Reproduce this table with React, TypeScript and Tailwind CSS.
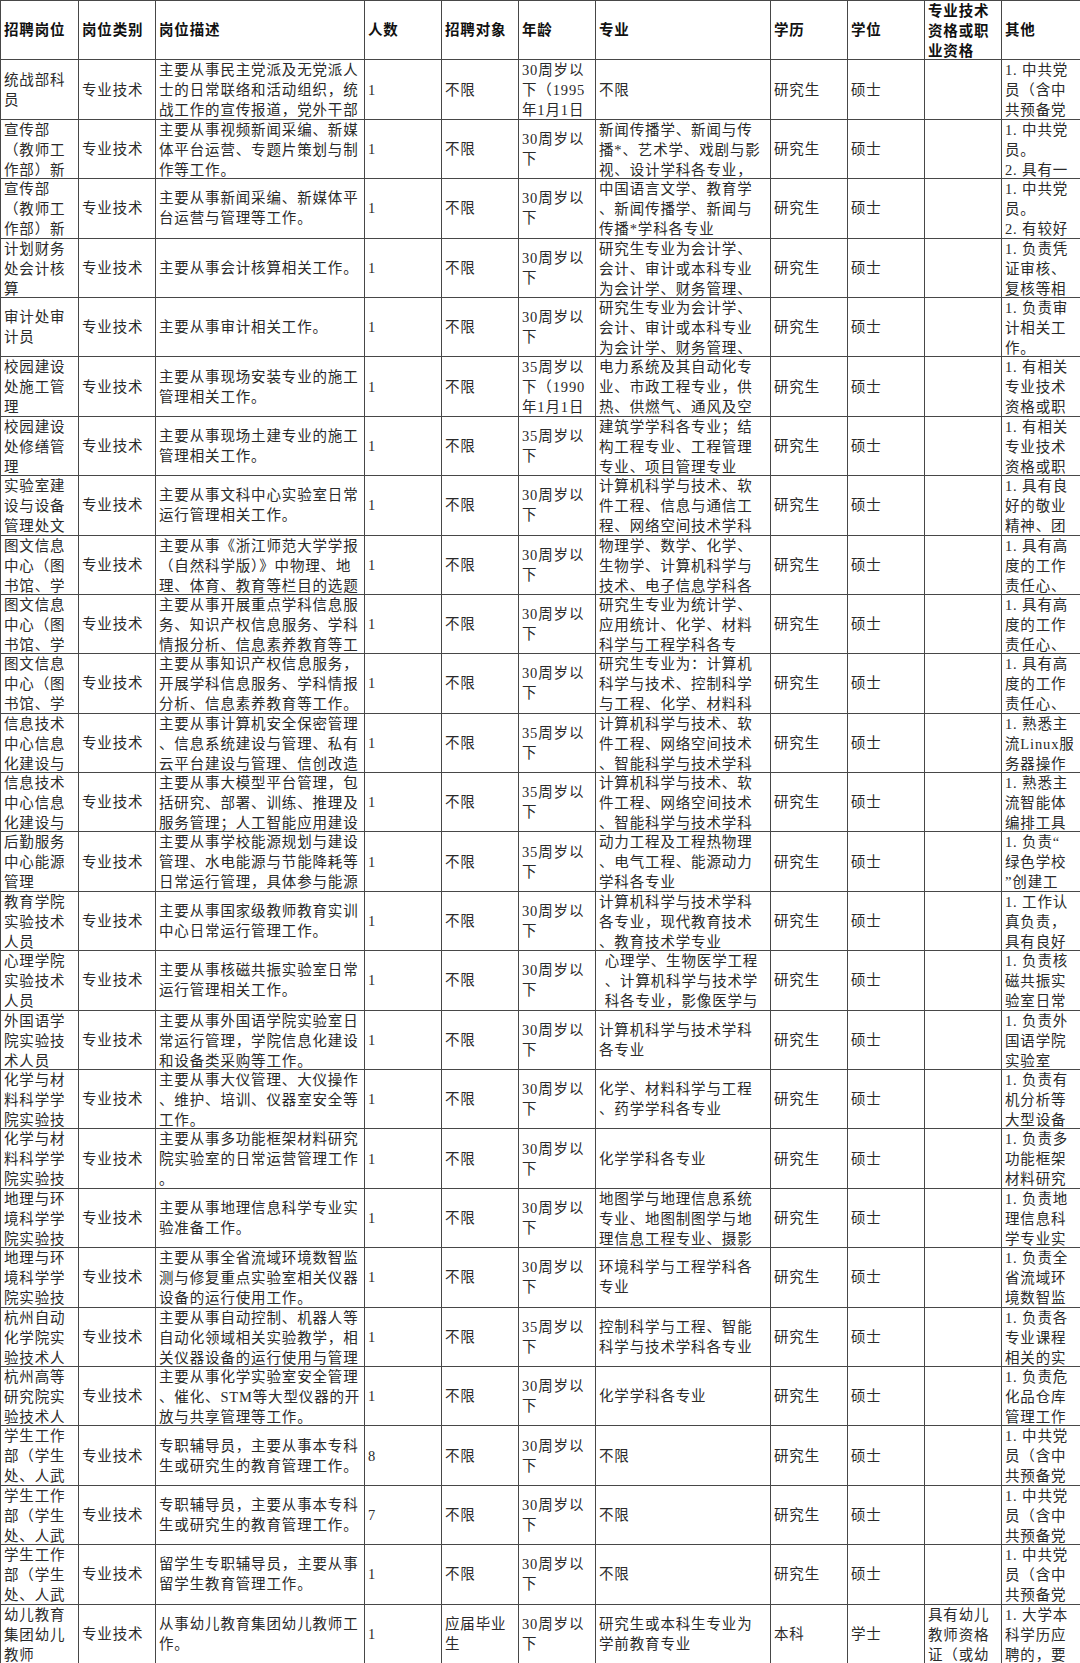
const headers = [
  "招聘岗位",
  "岗位类别",
  "岗位描述",
  "人数",
  "招聘对象",
  "年龄",
  "专业",
  "学历",
  "学位",
  "专业技术\n资格或职\n业资格",
  "其他",
];

const partyMember = "1. 中共党\n员（含中\n共预备党";
const u30 = "30周岁以\n下";
const u35 = "35周岁以\n下";
const xi = "图文信息\n中心（图\n书馆、学";
const it = "信息技术\n中心信息\n化建设与";
const stu = "学生工作\n部（学生\n处、人武";
const chem = "化学与材\n料科学学\n院实验技";
const geo = "地理与环\n境科学学\n院实验技";
const acct = "研究生专业为会计学、\n会计、审计或本科专业\n为会计学、财务管理、";
const cs = "计算机科学与技术、软\n件工程、网络空间技术\n、智能科学与技术学科";
const duty = "1. 具有高\n度的工作\n责任心、";
const build = "1. 有相关\n专业技术\n资格或职";

// 岗位类别 / 招聘对象 / 学历 / 学位 are mostly the same, so rows only list what changes
type Row = {
  post: string;
  desc: string;
  num?: string;
  target?: string;
  age: string;
  major: string;
  edu?: string;
  degree?: string;
  qual?: string;
  other: string;
};

const rows: Row[] = [
  {
    post: "统战部科\n员",
    desc: "主要从事民主党派及无党派人\n士的日常联络和活动组织，统\n战工作的宣传报道，党外干部",
    age: "30周岁以\n下（1995\n年1月1日",
    major: "不限",
    other: partyMember,
  },
  {
    post: "宣传部\n（教师工\n作部）新",
    desc: "主要从事视频新闻采编、新媒\n体平台运营、专题片策划与制\n作等工作。",
    age: u30,
    major: "新闻传播学、新闻与传\n播*、艺术学、戏剧与影\n视、设计学科各专业，",
    other: "1. 中共党\n员。\n2. 具有一",
  },
  {
    post: "宣传部\n（教师工\n作部）新",
    desc: "主要从事新闻采编、新媒体平\n台运营与管理等工作。",
    age: u30,
    major: "中国语言文学、教育学\n、新闻传播学、新闻与\n传播*学科各专业",
    other: "1. 中共党\n员。\n2. 有较好",
  },
  {
    post: "计划财务\n处会计核\n算",
    desc: "主要从事会计核算相关工作。",
    age: u30,
    major: acct,
    other: "1. 负责凭\n证审核、\n复核等相",
  },
  {
    post: "审计处审\n计员",
    desc: "主要从事审计相关工作。",
    age: u30,
    major: acct,
    other: "1. 负责审\n计相关工\n作。",
  },
  {
    post: "校园建设\n处施工管\n理",
    desc: "主要从事现场安装专业的施工\n管理相关工作。",
    age: "35周岁以\n下（1990\n年1月1日",
    major: "电力系统及其自动化专\n业、市政工程专业，供\n热、供燃气、通风及空",
    other: build,
  },
  {
    post: "校园建设\n处修缮管\n理",
    desc: "主要从事现场土建专业的施工\n管理相关工作。",
    age: u35,
    major: "建筑学学科各专业；结\n构工程专业、工程管理\n专业、项目管理专业",
    other: build,
  },
  {
    post: "实验室建\n设与设备\n管理处文",
    desc: "主要从事文科中心实验室日常\n运行管理相关工作。",
    age: u30,
    major: "计算机科学与技术、软\n件工程、信息与通信工\n程、网络空间技术学科",
    other: "1. 具有良\n好的敬业\n精神、团",
  },
  {
    post: xi,
    desc: "主要从事《浙江师范大学学报\n（自然科学版）》中物理、地\n理、体育、教育等栏目的选题",
    age: u30,
    major: "物理学、数学、化学、\n生物学、计算机科学与\n技术、电子信息学科各",
    other: duty,
  },
  {
    post: xi,
    desc: "主要从事开展重点学科信息服\n务、知识产权信息服务、学科\n情报分析、信息素养教育等工",
    age: u30,
    major: "研究生专业为统计学、\n应用统计、化学、材料\n科学与工程学科各专",
    other: duty,
  },
  {
    post: xi,
    desc: "主要从事知识产权信息服务，\n开展学科信息服务、学科情报\n分析、信息素养教育等工作。",
    age: u30,
    major: "研究生专业为：计算机\n科学与技术、控制科学\n与工程、化学、材料科",
    other: duty,
  },
  {
    post: it,
    desc: "主要从事计算机安全保密管理\n、信息系统建设与管理、私有\n云平台建设与管理、信创改造",
    age: u35,
    major: cs,
    other: "1. 熟悉主\n流Linux服\n务器操作",
  },
  {
    post: it,
    desc: "主要从事大模型平台管理，包\n括研究、部署、训练、推理及\n服务管理；人工智能应用建设",
    age: u35,
    major: cs,
    other: "1. 熟悉主\n流智能体\n编排工具",
  },
  {
    post: "后勤服务\n中心能源\n管理",
    desc: "主要从事学校能源规划与建设\n管理、水电能源与节能降耗等\n日常运行管理，具体参与能源",
    age: u35,
    major: "动力工程及工程热物理\n、电气工程、能源动力\n学科各专业",
    other: "1. 负责“\n绿色学校\n”创建工",
  },
  {
    post: "教育学院\n实验技术\n人员",
    desc: "主要从事国家级教师教育实训\n中心日常运行管理工作。",
    age: u30,
    major: "计算机科学与技术学科\n各专业，现代教育技术\n、教育技术学专业",
    other: "1. 工作认\n真负责，\n具有良好",
  },
  {
    post: "心理学院\n实验技术\n人员",
    desc: "主要从事核磁共振实验室日常\n运行管理相关工作。",
    age: u30,
    major: "\u2004心理学、生物医学工程\n\u2004、计算机科学与技术学\n\u2004科各专业，影像医学与",
    other: "1. 负责核\n磁共振实\n验室日常",
  },
  {
    post: "外国语学\n院实验技\n术人员",
    desc: "主要从事外国语学院实验室日\n常运行管理，学院信息化建设\n和设备类采购等工作。",
    age: u30,
    major: "计算机科学与技术学科\n各专业",
    other: "1. 负责外\n国语学院\n实验室",
  },
  {
    post: chem,
    desc: "主要从事大仪管理、大仪操作\n、维护、培训、仪器室安全等\n工作。",
    age: u30,
    major: "化学、材料科学与工程\n、药学学科各专业",
    other: "1. 负责有\n机分析等\n大型设备",
  },
  {
    post: chem,
    desc: "主要从事多功能框架材料研究\n院实验室的日常运营管理工作\n。",
    age: u30,
    major: "化学学科各专业",
    other: "1. 负责多\n功能框架\n材料研究",
  },
  {
    post: geo,
    desc: "主要从事地理信息科学专业实\n验准备工作。",
    age: u30,
    major: "地图学与地理信息系统\n专业、地图制图学与地\n理信息工程专业、摄影",
    other: "1. 负责地\n理信息科\n学专业实",
  },
  {
    post: geo,
    desc: "主要从事全省流域环境数智监\n测与修复重点实验室相关仪器\n设备的运行使用工作。",
    age: u30,
    major: "环境科学与工程学科各\n专业",
    other: "1. 负责全\n省流域环\n境数智监",
  },
  {
    post: "杭州自动\n化学院实\n验技术人",
    desc: "主要从事自动控制、机器人等\n自动化领域相关实验教学，相\n关仪器设备的运行使用与管理",
    age: u35,
    major: "控制科学与工程、智能\n科学与技术学科各专业",
    other: "1. 负责各\n专业课程\n相关的实",
  },
  {
    post: "杭州高等\n研究院实\n验技术人",
    desc: "主要从事化学实验室安全管理\n、催化、STM等大型仪器的开\n放与共享管理等工作。",
    age: u30,
    major: "化学学科各专业",
    other: "1. 负责危\n化品仓库\n管理工作",
  },
  {
    post: stu,
    desc: "专职辅导员，主要从事本专科\n生或研究生的教育管理工作。",
    num: "8",
    age: u30,
    major: "不限",
    other: partyMember,
  },
  {
    post: stu,
    desc: "专职辅导员，主要从事本专科\n生或研究生的教育管理工作。",
    num: "7",
    age: u30,
    major: "不限",
    other: partyMember,
  },
  {
    post: stu,
    desc: "留学生专职辅导员，主要从事\n留学生教育管理工作。",
    age: u30,
    major: "不限",
    other: partyMember,
  },
  {
    post: "幼儿教育\n集团幼儿\n教师",
    desc: "从事幼儿教育集团幼儿教师工\n作。",
    target: "应届毕业\n生",
    age: u30,
    major: "研究生或本科生专业为\n学前教育专业",
    edu: "本科",
    degree: "学士",
    qual: "具有幼儿\n教师资格\n证（或幼",
    other: "1. 大学本\n科学历应\n聘的，要",
  },
];

const gridCols =
  "grid grid-cols-[78px_77px_209px_77px_77px_77px_175px_77px_77px_77px_79px] h-[59.4px]";

function Cell({ text, bold }: { text: string; bold?: boolean }) {
  return (
    <div className="flex flex-col overflow-hidden border-r border-b border-[#474747] px-[3px]">
      <div
        className={
          "my-auto whitespace-pre text-[14.5px] leading-[20px] tracking-[0.85px] " +
          (bold ? "font-bold text-[#111]" : "text-[#2a2a2a]")
        }
      >
        {text}
      </div>
    </div>
  );
}

export default function App() {
  return (
    <div
      className="w-[1080px] h-[1663px] overflow-hidden bg-white"
      style={{ fontFamily: '"Liberation Serif", "Noto Sans CJK SC", serif' }}
    >
      <div className="border-l border-t border-[#474747]">
        <div className={gridCols}>
          {headers.map((h) => (
            <Cell key={h} text={h} bold />
          ))}
        </div>
        {rows.map((r, i) => (
          <div key={i} className={gridCols}>
            <Cell text={r.post} />
            <Cell text="专业技术" />
            <Cell text={r.desc} />
            <Cell text={r.num ?? "1"} />
            <Cell text={r.target ?? "不限"} />
            <Cell text={r.age} />
            <Cell text={r.major} />
            <Cell text={r.edu ?? "研究生"} />
            <Cell text={r.degree ?? "硕士"} />
            <Cell text={r.qual ?? ""} />
            <Cell text={r.other} />
          </div>
        ))}
      </div>
    </div>
  );
}
